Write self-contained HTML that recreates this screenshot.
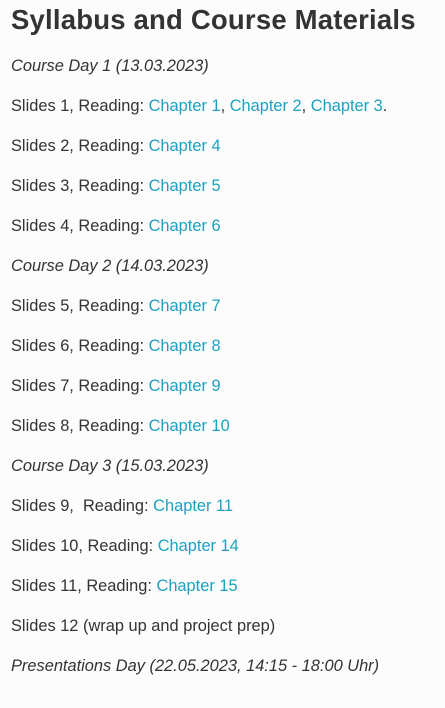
<!DOCTYPE html>
<html><head><meta charset="utf-8"><style>
html,body{margin:0;padding:0;background:#fcfcfc;}
body{width:445px;height:708px;overflow:hidden;font-family:"Liberation Sans",sans-serif;color:#333;}
h1{position:absolute;left:11px;top:2px;margin:0;font-size:27.5px;line-height:36px;font-weight:bold;color:#333;letter-spacing:0.2px;}
.r{position:absolute;left:11px;font-size:16.4px;line-height:20px;white-space:pre;}
i{font-style:italic;}
a{color:#1ba2c0;text-decoration:none;}
</style></head><body>
<h1>Syllabus and Course Materials</h1>
<div class="r" style="top:56px"><i>Course Day 1 (13.03.2023)</i></div>
<div class="r" style="top:96px">Slides 1, Reading: <a>Chapter 1</a>, <a>Chapter 2</a>, <a>Chapter 3</a>.</div>
<div class="r" style="top:136px">Slides 2, Reading: <a>Chapter 4</a></div>
<div class="r" style="top:176px">Slides 3, Reading: <a>Chapter 5</a></div>
<div class="r" style="top:216px">Slides 4, Reading: <a>Chapter 6</a></div>
<div class="r" style="top:256px"><i>Course Day 2 (14.03.2023)</i></div>
<div class="r" style="top:296px">Slides 5, Reading: <a>Chapter 7</a></div>
<div class="r" style="top:336px">Slides 6, Reading: <a>Chapter 8</a></div>
<div class="r" style="top:376px">Slides 7, Reading: <a>Chapter 9</a></div>
<div class="r" style="top:416px">Slides 8, Reading: <a>Chapter 10</a></div>
<div class="r" style="top:456px"><i>Course Day 3 (15.03.2023)</i></div>
<div class="r" style="top:496px">Slides 9,  Reading: <a>Chapter 11</a></div>
<div class="r" style="top:536px">Slides 10, Reading: <a>Chapter 14</a></div>
<div class="r" style="top:576px">Slides 11, Reading: <a>Chapter 15</a></div>
<div class="r" style="top:616px">Slides 12 (wrap up and project prep)</div>
<div class="r" style="top:656px"><i>Presentations Day (22.05.2023, 14:15 - 18:00 Uhr)</i></div>
</body></html>
